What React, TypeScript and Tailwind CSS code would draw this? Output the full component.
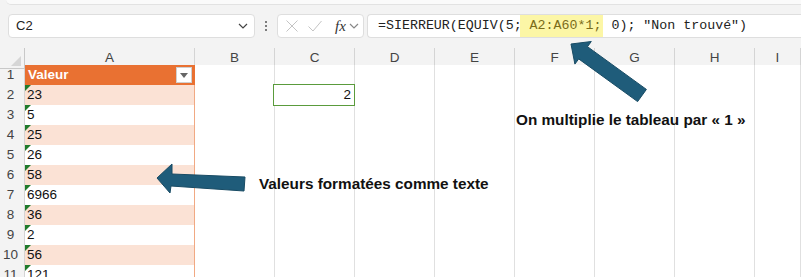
import React from 'react';

const values = ['23', '5', '25', '26', '58', '6966', '36', '2', '56', '121'];
const cols = ['A', 'B', 'C', 'D', 'E', 'F', 'G', 'H', 'I'];

const GRID = 'grid grid-cols-[25px_170px_80px_80px_80px_80px_80px_80px_80px_1fr]';

function ChevronDown({ className }: { className?: string }) {
  return (
    <svg width="10" height="6" viewBox="0 0 10 6" className={className}>
      <path d="M1 1l4 4 4-4" fill="none" stroke="currentColor" strokeWidth="1.2" />
    </svg>
  );
}

function FormulaRow() {
  return (
    <div className="flex items-center h-[24px] mt-[9px] pl-2">
      {/* Name box */}
      <div className="flex items-center justify-between w-[247px] h-full bg-white border border-[#dedede] rounded-[4px] pl-[7px] pr-[6px]">
        <span className="text-[13px] text-[#222]">C2</span>
        <ChevronDown className="text-[#444]" />
      </div>

      <div className="w-[22px] flex flex-col items-center gap-[2px]">
        <span className="w-[2px] h-[2px] bg-[#555] rounded-full" />
        <span className="w-[2px] h-[2px] bg-[#555] rounded-full" />
        <span className="w-[2px] h-[2px] bg-[#555] rounded-full" />
      </div>

      {/* cancel / enter / fx */}
      <div className="flex items-center w-[87px] h-full bg-white border border-[#dedede] rounded-[4px] pl-[7px]">
        <svg width="14" height="14" viewBox="0 0 14 14">
          <path d="M1.5 1.5l11 11M12.5 1.5l-11 11" stroke="#c4c4c4" strokeWidth="1" fill="none" />
        </svg>
        <svg width="16" height="14" viewBox="0 0 16 14" className="ml-[8px]">
          <path d="M1.5 7.5l4.5 4.5L14.5 2" stroke="#c4c4c4" strokeWidth="1" fill="none" />
        </svg>
        <span className="ml-[12px] text-[15px] italic text-[#333] font-['Liberation_Serif',serif] leading-none">fx</span>
        <ChevronDown className="ml-[3px] text-[#888]" />
      </div>

      {/* formula */}
      <div className="ml-[3px] flex-1 h-full bg-white border border-r-0 border-[#dedede] rounded-l-[4px] flex items-stretch pl-[10px] font-['Liberation_Mono',monospace] text-[13.3px] text-[#222] whitespace-pre">
        <span className="flex items-center">=SIERREUR(EQUIV(5; </span>
        <span className="flex items-center bg-[#fcf6a6] text-[#7a6c1a] -ml-[10px] pl-[10px] pr-[2px]">A2:A60*1;</span>
        <span className="flex items-center"> 0); "Non trouvé")</span>
      </div>
    </div>
  );
}

function HeaderRow() {
  return (
    <div className={`${GRID} h-[17px] mt-[10px] bg-[#f3f3f3]`}>
      <div className="relative border-r border-b border-[#c8c8c8]">
        <svg width="10" height="10" viewBox="0 0 10 10" className="absolute right-[3px] bottom-[2px]">
          <path d="M10 0v10H0z" fill="#d6d6d6" />
        </svg>
      </div>
      {cols.map((c) => (
        <div
          key={c}
          className="flex items-center justify-center text-[13.5px] text-[#444] border-r border-b border-[#d4d4d4] border-b-[#c8c8c8]"
        >
          {c}
        </div>
      ))}
    </div>
  );
}

function GreenMark() {
  return (
    <svg width="6" height="6" viewBox="0 0 6 6" className="absolute left-0 top-0">
      <path d="M0 0h6L0 6z" fill="#1f7a2b" />
    </svg>
  );
}

function Row({ n, value }: { n: number; value?: string }) {
  const header = n === 1;
  const band = !header && n % 2 === 0;
  return (
    <div className={`${GRID} h-[20px]`}>
      <div className="flex items-center justify-center pr-[3px] text-[13.5px] text-[#444] bg-[#f3f3f3] border-r border-b border-[#d4d4d4]">
        {n}
      </div>
      {header ? (
        <div className="relative flex items-center pl-[3px] bg-[#e97132] border-r border-b border-[#e97132]">
          <span className="text-white font-bold text-[13.5px]">Valeur</span>
          <div className="absolute right-[2px] top-[2px] w-[16px] h-[16px] bg-white border border-[#d0d0d0] flex items-center justify-center">
            <svg width="8" height="5" viewBox="0 0 8 5">
              <path d="M0 0h8L4 5z" fill="#666" />
            </svg>
          </div>
        </div>
      ) : (
        <div
          className={`relative flex items-center pl-[2px] text-[13.5px] text-[#111] border-r border-b border-[#f1a983] ${
            band ? 'bg-[#fbe2d5]' : 'bg-white'
          }`}
        >
          <GreenMark />
          {value}
        </div>
      )}
      {cols.slice(1).map((c) => (
        <div key={c} className="bg-white border-r border-b border-[#e0e0e0]">
          {n === 2 && c === 'C' && (
            <div className="h-[22px] -mt-[1px] -ml-[2px] -mr-[1px] border-[1.5px] border-[#5a9b3c] flex items-center justify-end pr-[3px] text-[13.5px] text-[#111] bg-white relative">
              2
            </div>
          )}
        </div>
      ))}
    </div>
  );
}

export default function App() {
  return (
    <div className="relative w-[801px] h-[277px] overflow-hidden bg-[#f3f3f3] font-['Liberation_Sans',Arial,sans-serif]">
      <div className="h-[5px] bg-[#fafafa] border-b border-[#e2e2e2] ml-[6px] rounded-bl-[6px]" />
      <FormulaRow />
      <HeaderRow />
      <div>
        {Array.from({ length: 11 }, (_, i) => (
          <Row key={i} n={i + 1} value={i > 0 ? values[i - 1] : undefined} />
        ))}
      </div>

      {/* callouts */}
      <svg width="801" height="277" className="absolute left-0 top-0 pointer-events-none">
        <polygon
          points="571,44 591.3,41.5 587.5,46.7 646.4,89.4 637.6,101.6 578.7,58.9 574.9,64.1"
          fill="#1f5c7a"
          stroke="#184b64"
          strokeWidth="1"
        />
        <polygon
          points="157,178 172,164 172,174 245,177 244,191 171,186 170,193"
          fill="#1f5c7a"
          stroke="#184b64"
          strokeWidth="1"
        />
      </svg>
      <div className="absolute left-[516px] top-[109px] text-[15.3px] leading-[22px] font-bold text-[#111] whitespace-nowrap">
        On multiplie le tableau par « 1 »
      </div>
      <div className="absolute left-[259px] top-[173px] text-[15.3px] leading-[22px] font-bold text-[#111] whitespace-nowrap">
        Valeurs formatées comme texte
      </div>
    </div>
  );
}
